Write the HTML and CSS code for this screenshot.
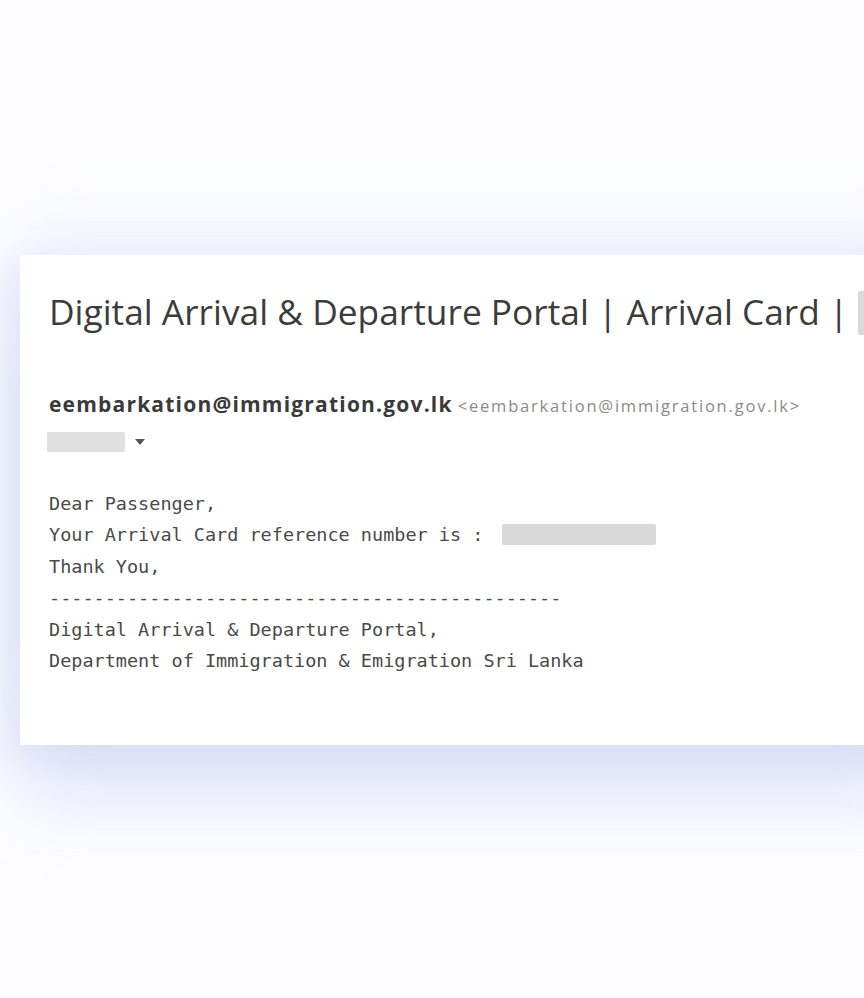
FILE: index.html
```html
<!DOCTYPE html>
<html lang="en">

<head>
    <meta charset="UTF-8">
    <meta name="viewport" content="width=device-width, initial-scale=1.0">
    <title>Arrival Card</title>
    <link rel="stylesheet" href="styles.css">
</head>

<body>
    <div id="stage">
        <div class="mail">
            <h1 class="subject">Digital Arrival &amp; Departure Portal | Arrival Card |<span class="blur blur-subject"></span></h1>

            <div class="sender">
                <span class="sender-name">eembarkation@immigration.gov.lk</span>
                <span class="sender-addr">&lt;eembarkation@immigration.gov.lk&gt;</span>
            </div>
            <div class="to">
                <span class="blur blur-to"></span>
                <span class="caret"></span>
            </div>

            <pre class="body">Dear Passenger,
Your Arrival Card reference number is : <span class="blur blur-ref"></span>
Thank You,
----------------------------------------------
Digital Arrival &amp; Departure Portal,
Department of Immigration &amp; Emigration Sri Lanka</pre>
        </div>
    </div>
</body>

</html>
```

FILE: styles.css
```css
* {
    margin: 0;
    padding: 0;
    box-sizing: border-box;
}

html,
body {
    width: 864px;
    height: 998px;
    overflow: hidden;
    background-color: #fdfdff;
}

#stage {
    padding: 255px 0 0 20px;
}

.mail {
    width: 900px;
    height: 490px;
    background-color: #fff;
    padding: 35px 0 0 29px;
    box-shadow: 0 -30px 60px rgba(225, 228, 248, 0.45),
        0 50px 70px rgba(210, 216, 246, 0.75),
        -10px 10px 30px rgba(220, 224, 248, 0.6);
}

.subject {
    font-family: "Open Sans", "Noto Sans", sans-serif;
    font-weight: 400;
    font-size: 35.3px;
    line-height: 42px;
    color: #3c3c3c;
    white-space: nowrap;
}

.blur {
    display: inline-block;
    background-color: #d9d9d9;
    border-radius: 2px;
}

.blur-subject {
    width: 40px;
    height: 44px;
    vertical-align: -10px;
    margin-left: 10px;
}

.sender {
    margin-top: 56px;
    white-space: nowrap;
    line-height: 26px;
}

.sender-name {
    font-family: "Open Sans", Arial, sans-serif;
    font-weight: 700;
    font-size: 21px;
    letter-spacing: 1.2px;
    color: #3a3a3a;
}

.sender-addr {
    font-family: "Open Sans", Arial, sans-serif;
    font-size: 16.5px;
    letter-spacing: 1.8px;
    color: #8a8a8a;
    margin-left: 1px;
}

.to {
    display: flex;
    align-items: center;
    gap: 10px;
    margin-top: 12px;
    margin-left: -2px;
}

.blur-to {
    width: 78px;
    height: 20px;
    background-color: #e0e0e0;
}

.caret {
    width: 0;
    height: 0;
    border-left: 5px solid transparent;
    border-right: 5px solid transparent;
    border-top: 6px solid #555;
}

.body {
    margin-top: 36px;
    font-family: "DejaVu Sans Mono", "Liberation Mono", monospace;
    font-size: 18.5px;
    line-height: 31.4px;
    color: #4a4a4a;
}

.blur-ref {
    width: 154px;
    height: 21px;
    vertical-align: -4px;
    margin-left: 7px;
}
```
